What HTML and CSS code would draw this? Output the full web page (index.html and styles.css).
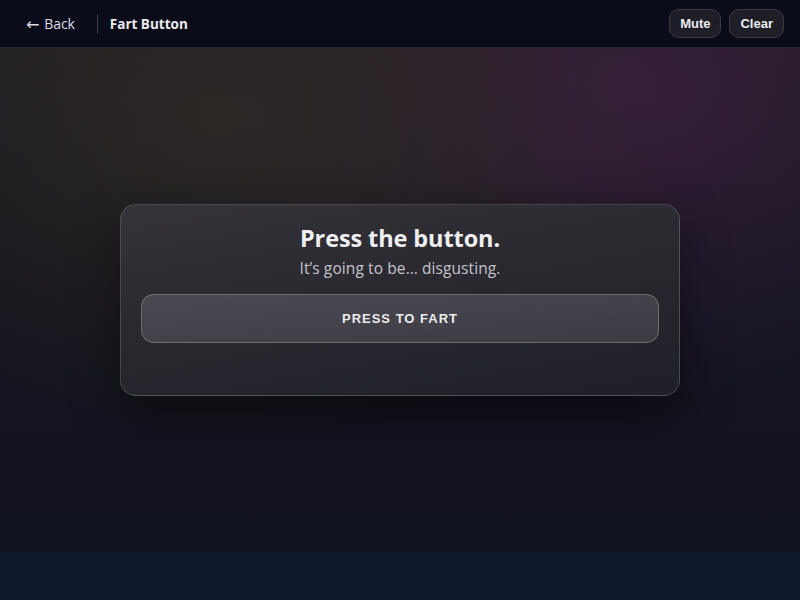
FILE: index.html
```html
<!DOCTYPE html>
<html lang="en">
<head>
<meta charset="utf-8">
<title>Fart Button</title>
<link rel="stylesheet" href="styles.css">
</head>
<body>
<div class="app">
  <header class="topbar">
    <div class="left">
      <a class="back" href="#"><span class="arrow">←</span>Back</a>
      <span class="divider"></span>
      <span class="title">Fart Button</span>
    </div>
    <div class="right">
      <button class="pill">Mute</button>
      <button class="pill">Clear</button>
    </div>
  </header>
  <main class="stage">
    <section class="card">
      <h1 class="heading">Press the button.</h1>
      <p class="sub">It’s going to be… disgusting.</p>
      <button class="fart">PRESS TO FART</button>
      <div class="status"></div>
    </section>
  </main>
  <footer class="foot"></footer>
</div>
</body>
</html>
```

FILE: styles.css
```css
* { box-sizing: border-box; }
html, body { margin: 0; padding: 0; }
body {
  width: 800px;
  height: 600px;
  overflow: hidden;
  background: #0f172a;
  font-family: "Open Sans", "Noto Sans", sans-serif;
  color: #e8e8ee;
}
.app { display: flex; flex-direction: column; height: 600px; }
.topbar {
  height: 48px;
  flex: none;
  display: flex;
  align-items: center;
  justify-content: space-between;
  padding: 0 16px 0 26px;
  background: #0b0c19;
  border-bottom: 1px solid #26252f;
}
.left { display: flex; align-items: center; }
.back {
  display: flex;
  align-items: center;
  color: #dcdce2;
  text-decoration: none;
  font-size: 14px;
  letter-spacing: -0.1px;
}
.arrow {
  font-family: "DejaVu Sans", sans-serif;
  font-size: 16px;
  margin-right: 5px;
  position: relative;
  top: 1px;
}
.divider {
  width: 1px;
  height: 20px;
  background: #3a3a45;
  margin: 0 12px 0 22px;
}
.title {
  font-weight: 700;
  font-size: 13.5px;
  color: #ececf0;
}
.right { display: flex; gap: 8px; }
.pill {
  height: 29px;
  padding: 0 10px;
  border-radius: 10px;
  border: 1px solid #3b3b46;
  background: #1e1e27;
  color: #ececf0;
  font-family: "Liberation Sans", Arial, sans-serif;
  font-weight: 700;
  font-size: 13px;
}
.stage {
  flex: none;
  height: 504px;
  display: flex;
  align-items: center;
  justify-content: center;
  background:
    radial-gradient(ellipse 460px 320px at 220px 70px, rgba(50,44,38,0.75), rgba(50,44,38,0) 100%),
    radial-gradient(ellipse 420px 320px at 630px 40px, rgba(58,32,62,0.8), rgba(58,32,62,0) 100%),
    linear-gradient(180deg, #1d1b22 0%, #14141f 55%, #11131f 100%);
}
.card {
  width: 560px;
  height: 192px;
  border-radius: 16px;
  border: 1px solid rgba(255,255,255,0.16);
  background: linear-gradient(170deg, #36333a 0%, #2a2930 45%, #1f1f29 100%);
  box-shadow: 0 20px 50px rgba(0,0,0,0.45);
  padding: 19px 20px;
  display: flex;
  flex-direction: column;
  align-items: center;
}
.heading {
  margin: 0;
  font-size: 23.5px;
  font-weight: 700;
  line-height: 28px;
  color: #f0f0f4;
  letter-spacing: -0.1px;
}
.sub {
  margin: 6px 0 0;
  font-size: 15.5px;
  line-height: 20px;
  color: #c4c3cb;
  letter-spacing: 0.1px;
}
.fart {
  margin-top: 16px;
  width: 100%;
  height: 49px;
  border-radius: 13px;
  border: 1px solid rgba(255,255,255,0.22);
  background: linear-gradient(175deg, #4a4851 0%, #3d3c44 100%);
  color: #ececf0;
  font-family: "Liberation Sans", Arial, sans-serif;
  font-weight: 700;
  font-size: 13px;
  letter-spacing: 1px;
}
.status { height: 31px; }
.foot { flex: 1; background: #0f172a; }
```
